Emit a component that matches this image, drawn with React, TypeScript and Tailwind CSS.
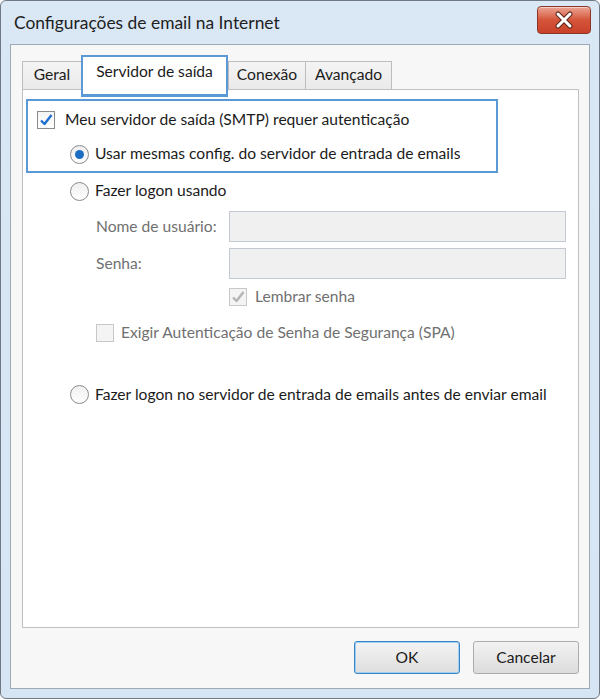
import type { ReactNode } from 'react';

const font = { fontFamily: 'Lato, "Noto Sans", sans-serif' };

function CloseButton() {
  return (
    <button className="w-[54px] h-[28px] rounded-[4px] border border-[#8d3526] bg-gradient-to-b from-[#eaa493] via-[#d4543a] to-[#c9412a] flex items-center justify-center shadow-[inset_0_1px_0_rgba(255,255,255,0.5)]">
      <svg width="20" height="18" viewBox="0 0 20 18">
        <path d="M4 3 L16 15 M16 3 L4 15" stroke="#5a2418" strokeWidth="5" strokeLinecap="round" />
        <path d="M4 3 L16 15 M16 3 L4 15" stroke="#ffffff" strokeWidth="3" strokeLinecap="round" />
      </svg>
    </button>
  );
}

function Checkbox({ checked, disabled }: { checked?: boolean; disabled?: boolean }) {
  return (
    <span
      className={`w-[18px] h-[18px] shrink-0 border flex items-center justify-center ${
        disabled
          ? 'border-[#c8c8c8] bg-[#f4f4f4]'
          : 'border-[#8b8b8b] bg-gradient-to-b from-[#f4f4f4] to-[#ffffff]'
      }`}
    >
      {checked && (
        <svg width="14" height="14" viewBox="0 0 14 14">
          <path
            d="M2 7.5 L5.5 11 L12.5 2"
            fill="none"
            stroke={disabled ? '#b4b4b4' : '#1f6fd0'}
            strokeWidth="2.4"
            strokeLinejoin="round"
          />
        </svg>
      )}
    </span>
  );
}

function Radio({ checked }: { checked?: boolean }) {
  return (
    <span className="w-[19px] h-[19px] shrink-0 rounded-full border border-[#8b8b8b] bg-gradient-to-b from-[#efefef] to-[#ffffff] flex items-center justify-center">
      {checked && <span className="w-[9px] h-[9px] rounded-full bg-[#1b6ec2]" />}
    </span>
  );
}

function Row({ children, className = '' }: { children: ReactNode; className?: string }) {
  return <div className={`flex items-center ${className}`}>{children}</div>;
}

function Field() {
  return <div className="w-[337px] h-[31px] border border-[#c3cad3] bg-[#f0f0f0]" />;
}

const tabBase =
  'h-[28px] pt-[1px] border-t border-[#bdbdbd] bg-gradient-to-b from-[#f4f4f4] to-[#eaeaea] text-center leading-[22px]';

export default function App() {
  return (
    <div className="w-[600px] h-[699px] bg-white text-[#1b1b1b]" style={font}>
      <div className="h-full rounded-[6px] border border-[#6f7883] bg-gradient-to-b from-[#dae7f5] to-[#d6e5f4] flex flex-col px-[9px] pb-[9px]">
        {/* title bar */}
        <div className="h-[43px] flex items-start justify-between">
          <span className="pl-[4px] pt-[11px] text-[17.4px] leading-[22px] text-[#1e1e1e]">
            Configurações de email na Internet
          </span>
          <div className="pt-[5px] -mr-[1px]">
            <CloseButton />
          </div>
        </div>

        {/* client area */}
        <div className="flex-1 border border-[#9fa9b4] bg-[#f7f7f7] flex flex-col pl-[11px] pr-[10px] pt-[10px] pb-[14px] text-[15.6px]">
          {/* tab strip */}
          <div className="flex items-end h-[34px] relative z-10">
            <div className={`${tabBase} w-[59px] border-l`}>Geral</div>
            <div className="w-[147px] h-[42px] -mb-[8px] pt-[3px] border-[2px] border-b-[3px] border-[#5b99d6] bg-white text-center leading-[22px]">
              Servidor de saída
            </div>
            <div className={`${tabBase} w-[78px] border-x`}>Conexão</div>
            <div className={`${tabBase} w-[86px] border-r`}>Avançado</div>
          </div>

          {/* tab panel */}
          <div className="flex-1 border border-[#c0c0c0] bg-white pt-[9px] pl-[3px]">
            <div className="w-[472px] h-[74px] border-[2px] border-[#5b99d6] flex flex-col pl-[9px]">
              <Row className="h-[36px] pt-[2px] gap-[10px]">
                <Checkbox checked />
                <span>Meu servidor de saída (SMTP) requer autenticação</span>
              </Row>
              <Row className="h-[34px] pl-[33px] gap-[6px]">
                <Radio checked />
                <span>Usar mesmas config. do servidor de entrada de emails</span>
              </Row>
            </div>

            <div className="pl-[44px] flex flex-col">
              <Row className="h-[36px] gap-[6px]">
                <Radio />
                <span>Fazer logon usando</span>
              </Row>
              <Row className="mt-[2px] pl-[26px]">
                <span className="w-[133px] text-[#707070]">Nome de usuário:</span>
                <Field />
              </Row>
              <Row className="mt-[6px] pl-[26px]">
                <span className="w-[133px] text-[#707070]">Senha:</span>
                <Field />
              </Row>
              <Row className="mt-[8px] pl-[159px] gap-[8px] h-[20px]">
                <Checkbox checked disabled />
                <span className="text-[#707070]">Lembrar senha</span>
              </Row>
              <Row className="mt-[16px] pl-[26px] gap-[7px] h-[20px]">
                <Checkbox disabled />
                <span className="text-[#707070]">Exigir Autenticação de Senha de Segurança (SPA)</span>
              </Row>
              <Row className="mt-[40px] gap-[6px]">
                <Radio />
                <span>Fazer logon no servidor de entrada de emails antes de enviar email</span>
              </Row>
            </div>
          </div>

          {/* dialog buttons */}
          <div className="flex justify-end gap-[13px] pt-[13px]">
            <button className="w-[106px] h-[33px] rounded-[3px] border border-[#3a83c4] bg-gradient-to-b from-[#f4f4f4] to-[#dedede] shadow-[inset_0_0_0_1px_#9fd0f4]">
              OK
            </button>
            <button className="w-[106px] h-[33px] rounded-[3px] border border-[#acacac] bg-gradient-to-b from-[#f2f2f2] to-[#dcdcdc]">
              Cancelar
            </button>
          </div>
        </div>
      </div>
    </div>
  );
}
